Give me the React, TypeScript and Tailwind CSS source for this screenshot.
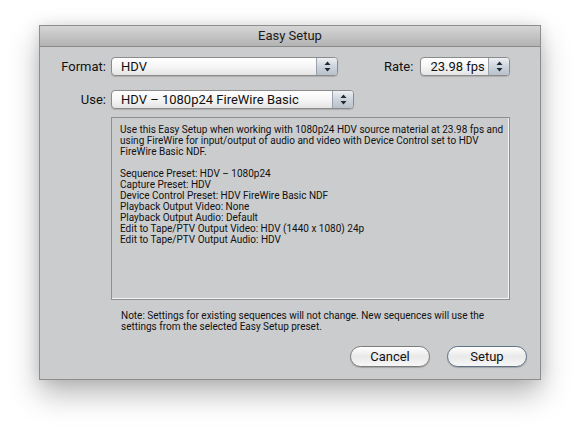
import React from "react";

const font = { fontFamily: "Roboto, 'Liberation Sans', sans-serif" };

const descLines = [
  "Use this Easy Setup when working with 1080p24 HDV source material at 23.98 fps and",
  "using FireWire for input/output of audio and video with Device Control set to HDV",
  "FireWire Basic NDF.",
  "",
  "Sequence Preset: HDV \u2013 1080p24",
  "Capture Preset: HDV",
  "Device Control Preset: HDV FireWire Basic NDF",
  "Playback Output Video: None",
  "Playback Output Audio: Default",
  "Edit to Tape/PTV Output Video: HDV (1440 x 1080) 24p",
  "Edit to Tape/PTV Output Audio: HDV",
];

// up/down arrows on the right end of a popup
const Stepper = () => (
  <div className="flex h-full w-[21px] items-center justify-center border-l border-[#9aa1aa] bg-gradient-to-b from-[#eef1f5] via-[#cdd4dc] to-[#b9c1cb]">
    <svg width="7" height="11" viewBox="0 0 7 11">
      <path d="M3.5 0.5 L6.5 4 L0.5 4 Z" fill="#1e2a36" />
      <path d="M3.5 10.5 L6.5 7 L0.5 7 Z" fill="#1e2a36" />
    </svg>
  </div>
);

const Popup = ({ label, width }: { label: string; width: string }) => (
  <div
    className={`${width} flex h-[19px] items-center overflow-hidden rounded-[4px] border border-[#8b8b8b] bg-gradient-to-b from-white via-[#f6f6f6] to-[#e4e4e4] shadow-[0_1px_1px_rgba(0,0,0,0.15)]`}
  >
    <span className="flex-1 pl-[9px] text-[13px] leading-none text-[#111]">{label}</span>
    <Stepper />
  </div>
);

const Button = ({ label, primary }: { label: string; primary?: boolean }) => (
  <button
    className={`flex h-[21px] w-[80px] items-center justify-center rounded-full border bg-gradient-to-b from-white via-[#e9e9e9] to-[#f7f7f7] text-[13px] text-[#111] shadow-[0_1px_1px_rgba(0,0,0,0.2)] ${
      primary ? "border-[#5d7288]" : "border-[#7c7c7c]"
    }`}
  >
    {label}
  </button>
);

export default function App() {
  return (
    <div className="h-[434px] w-[580px] bg-white pl-[39px] pt-[25px]" style={font}>
      <div className="flex h-[355px] w-[502px] flex-col border border-[#8d8d8d] bg-[#cbcccd] shadow-[0_14px_28px_rgba(0,0,0,0.28),0_0_14px_rgba(0,0,0,0.1)]">
        {/* Title bar */}
        <div className="flex h-[21px] items-center justify-center border-b border-[#8a8a8a] bg-gradient-to-b from-[#d6d6d6] to-[#b3b3b3] text-[13px] text-[#1a1a1a]">
          Easy Setup
        </div>

        {/* Format / Rate */}
        <div className="mt-[10px] flex items-center">
          <span className="w-[66px] text-right text-[13px] text-[#111]">Format:</span>
          <div className="ml-[5px]">
            <Popup label="HDV" width="w-[227px]" />
          </div>
          <span className="ml-[46px] text-[13px] text-[#111]">Rate:</span>
          <div className="ml-[7px]">
            <Popup label="23.98 fps" width="w-[90px]" />
          </div>
        </div>

        {/* Use */}
        <div className="mt-[13px] flex items-center">
          <span className="w-[66px] text-right text-[13px] text-[#111]">Use:</span>
          <div className="ml-[5px]">
            <Popup label={"HDV \u2013 1080p24 FireWire Basic"} width="w-[243px]" />
          </div>
        </div>

        {/* Description */}
        <div className="ml-[71px] mt-[8px] h-[183px] w-[399px] border border-[#8f8f8f] pl-[8px] pt-[6px] text-[10px] leading-[11px] text-[#111] shadow-[inset_-1px_-1px_0_#f4f4f4]">
          {descLines.map((l, i) => (
            <div key={i} className="h-[11px] whitespace-nowrap">
              {l}
            </div>
          ))}
        </div>

        {/* Note */}
        <div className="ml-[81px] mt-[10px] text-[10px] leading-[11px] text-[#111]">
          <div>Note: Settings for existing sequences will not change. New sequences will use the</div>
          <div>settings from the selected Easy Setup preset.</div>
        </div>

        {/* Buttons */}
        <div className="mr-[13px] mt-[14px] flex justify-end gap-[17px]">
          <Button label="Cancel" />
          <Button label="Setup" primary />
        </div>
      </div>
    </div>
  );
}
